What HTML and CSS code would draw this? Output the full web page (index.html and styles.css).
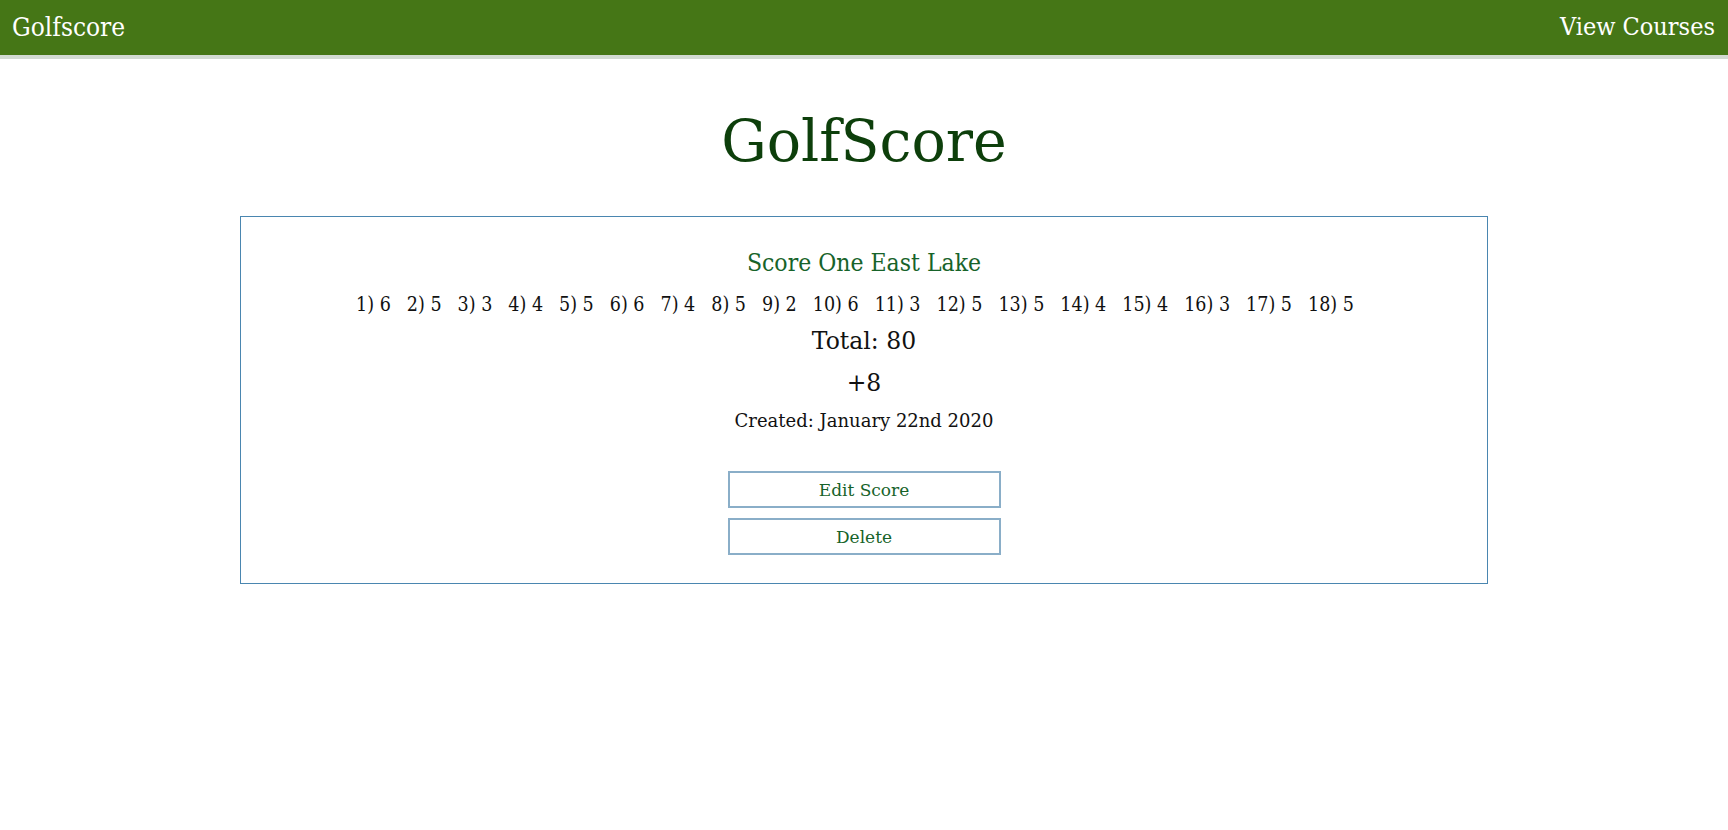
FILE: index.html
```html
<!DOCTYPE html>
<html lang="en">
<head>
<meta charset="utf-8">
<title>GolfScore</title>
<link rel="stylesheet" href="styles.css">
</head>
<body>
<nav class="navbar">
  <a class="brand" href="#">Golfscore</a>
  <a class="nav-link" href="#">View Courses</a>
</nav>
<main class="page">
  <h1 class="page-title">GolfScore</h1>
  <section class="card">
    <h2 class="card-title">Score One East Lake</h2>
    <ul class="holes">
      <li>1) 6</li><li>2) 5</li><li>3) 3</li><li>4) 4</li><li>5) 5</li><li>6) 6</li><li>7) 4</li><li>8) 5</li><li>9) 2</li><li>10) 6</li><li>11) 3</li><li>12) 5</li><li>13) 5</li><li>14) 4</li><li>15) 4</li><li>16) 3</li><li>17) 5</li><li>18) 5</li>
    </ul>
    <p class="total">Total: 80</p>
    <p class="diff">+8</p>
    <p class="created">Created: January 22nd 2020</p>
    <div class="actions">
      <button class="btn" type="button">Edit Score</button>
      <button class="btn" type="button">Delete</button>
    </div>
  </section>
</main>
</body>
</html>
```
FILE: styles.css
```css
* { box-sizing: border-box; }
html, body { margin: 0; padding: 0; background: #fff; }
body { font-family: "DejaVu Serif", "Liberation Serif", serif; color: #111; }

.navbar {
  height: 59px;
  background: #457616;
  border-bottom: 4px solid #d2dad2;
  display: flex;
  align-items: center;
  justify-content: space-between;
  padding: 0 13px 2px 12px;
}
.navbar a {
  color: #fff;
  text-decoration: none;
  font-family: "DejaVu Serif Condensed", "DejaVu Serif", serif;
}
.brand { font-size: 26px; }
.nav-link { font-size: 25px; }

.page { display: flex; flex-direction: column; align-items: center; }

.page-title {
  margin: 50px 0 0;
  font-weight: normal;
  font-size: 57px;
  line-height: 64px;
  color: #0d3f0b;
}

.card {
  width: 1248px;
  margin-top: 43px;
  border: 1px solid #4a86b0;
  display: flex;
  flex-direction: column;
  align-items: center;
  padding: 31px 0 28px;
}

.card-title {
  margin: 0;
  font-weight: normal;
  font-family: "DejaVu Serif Condensed", "DejaVu Serif", serif;
  font-size: 24.5px;
  line-height: 30px;
  color: #17632a;
}

.holes {
  list-style: none;
  margin: 15px 0 0;
  padding: 0 18px 0 0;
  display: flex;
  gap: 16px;
  font-family: "DejaVu Serif Condensed", "DejaVu Serif", serif;
  font-size: 19.5px;
  line-height: 24px;
}

.total {
  margin: 9px 0 0;
  font-size: 23.5px;
  line-height: 30px;
}
.diff {
  margin: 12px 0 0;
  font-size: 23.5px;
  line-height: 30px;
}
.created {
  margin: 11px 0 0;
  font-size: 18px;
  line-height: 24px;
}

.actions {
  margin-top: 38px;
  display: flex;
  flex-direction: column;
  gap: 10px;
}
.btn {
  width: 273px;
  height: 37px;
  background: #fff;
  border: 2px solid #8aaec8;
  font-family: "DejaVu Serif", serif;
  font-size: 17px;
  color: #17632a;
  padding: 0;
}
```
